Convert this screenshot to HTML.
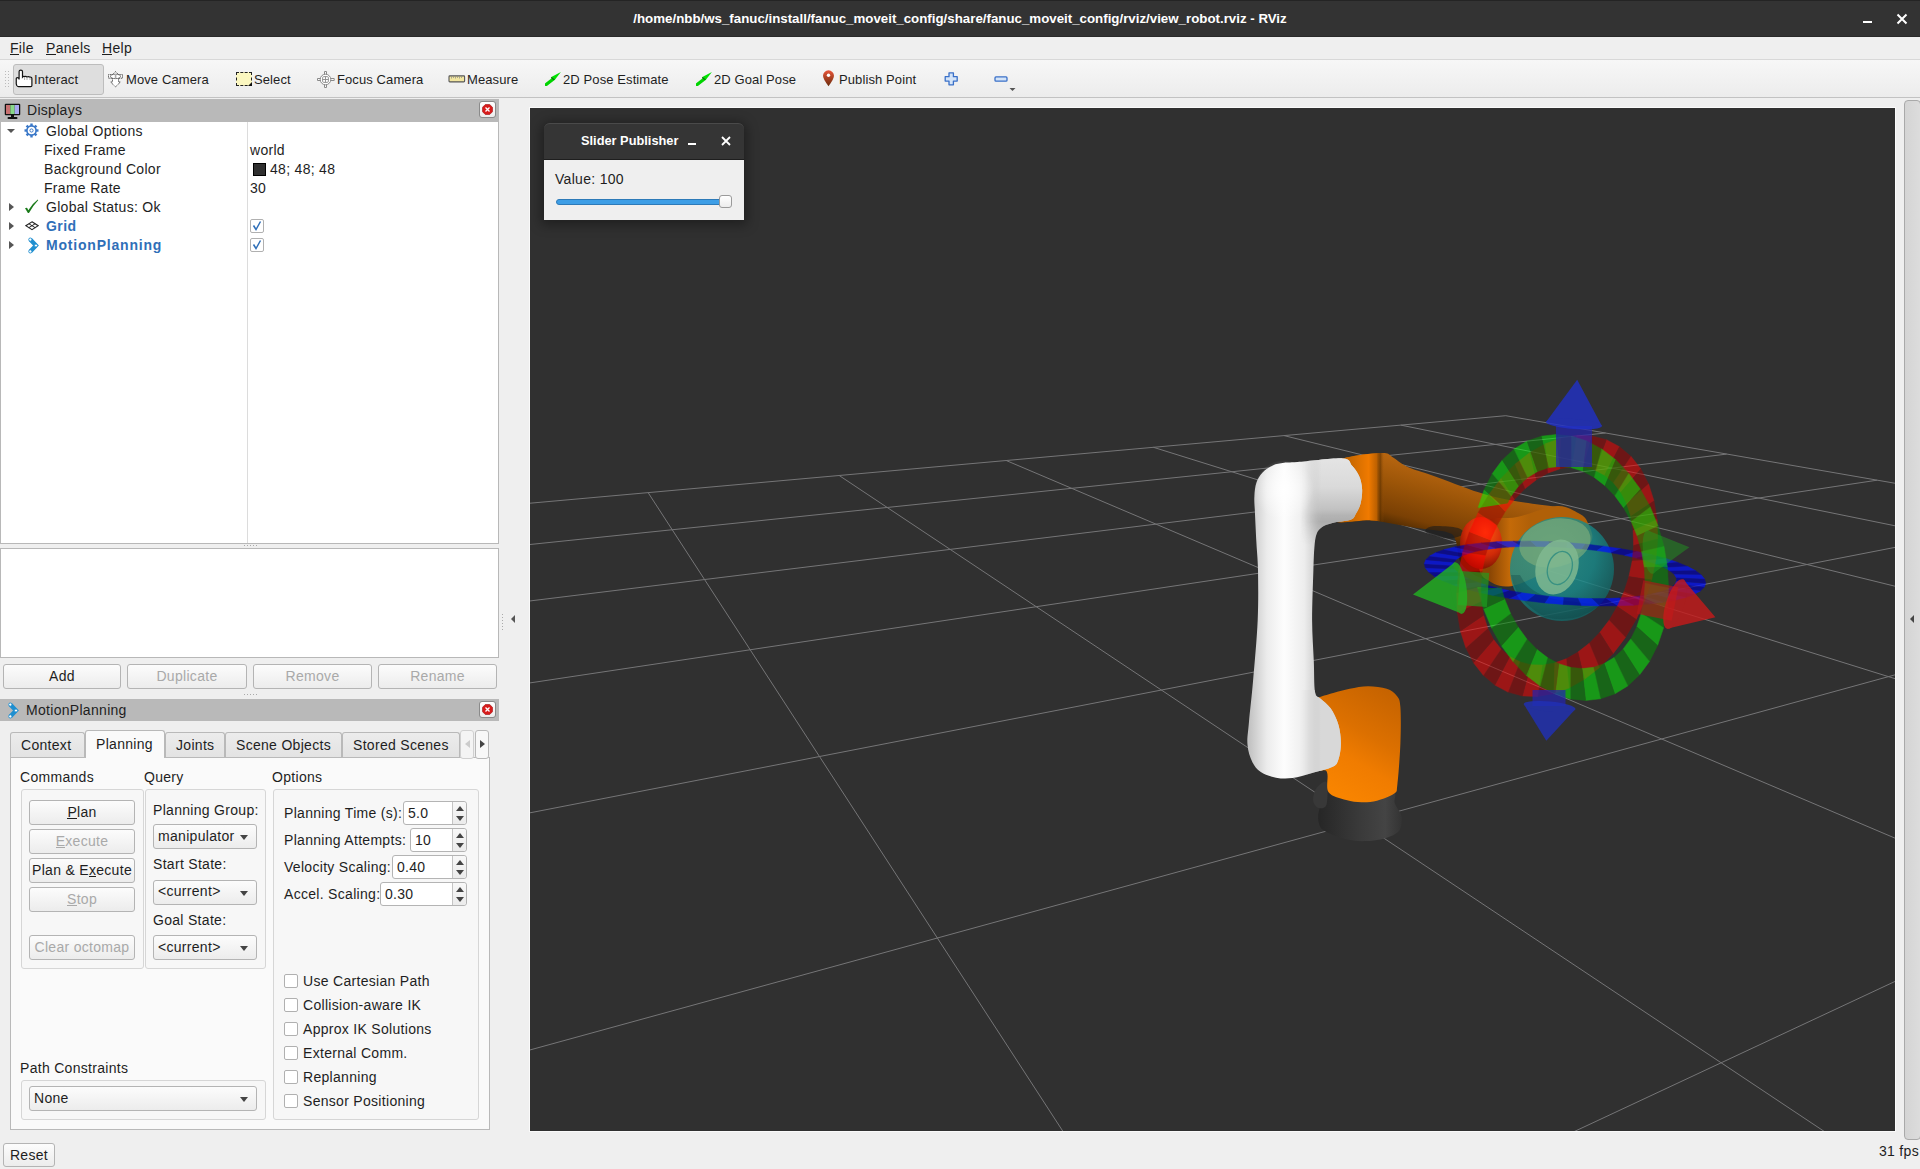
<!DOCTYPE html>
<html><head><meta charset="utf-8"><style>
*{margin:0;padding:0;box-sizing:border-box}
html,body{width:1920px;height:1169px;overflow:hidden;background:#efefef;font-family:"Liberation Sans",sans-serif}
.t{position:absolute;white-space:nowrap;font-size:14px;line-height:16px;letter-spacing:0.3px;color:#1e1e1e}
.abs{position:absolute}
.btn{position:absolute;border:1px solid #b4b4b4;border-radius:3px;background:linear-gradient(#fcfcfc,#ececec)}
.spin{position:absolute;border:1px solid #b4b4b4;border-radius:3px;background:#fff}
.spinbtn{position:absolute;border-left:1px solid #c4c4c4;background:linear-gradient(#f8f8f8,#ebebeb);border-radius:0 3px 3px 0}
.cb{position:absolute;width:14px;height:14px;border:1px solid #b0b0b0;border-radius:2px;background:#fff}
.tri-d{position:absolute;width:0;height:0;border-left:4.5px solid transparent;border-right:4.5px solid transparent;border-top:5px solid #444}
.tri-u{position:absolute;width:0;height:0;border-left:4.5px solid transparent;border-right:4.5px solid transparent;border-bottom:5px solid #444}
.tri-r{position:absolute;width:0;height:0;border-top:4px solid transparent;border-bottom:4px solid transparent;border-left:5px solid #555}
.tri-l{position:absolute;width:0;height:0;border-top:4px solid transparent;border-bottom:4px solid transparent;border-right:5px solid #555}
.gb{position:absolute;border:1px solid #d6d6d6;border-radius:3px;background:#f7f7f7}
.hdr{position:absolute;background:#b9b9b9}
.closeb{position:absolute;width:17px;height:17px;background:linear-gradient(#ffffff,#ececec);border:1px solid #8a8a8a;border-radius:3px}
.tab{position:absolute;border:1px solid #b9b9b9;border-bottom:none;border-radius:3px 3px 0 0;background:linear-gradient(#ececec,#e3e3e3)}
u{text-decoration:none;border-bottom:1px solid currentColor;line-height:12px;display:inline-block}
</style></head><body>
<div class="abs" style="left:0;top:0;width:1920px;height:37px;background:#333333"></div>
<div class="abs" style="left:0;top:0;width:1920px;height:1px;background:#242424"></div>
<div class="abs" style="left:0;top:36px;width:1920px;height:1px;background:#2a2a2a"></div>
<div class="t" style="left:0;width:1920px;text-align:center;top:11px;font-weight:bold;font-size:13.3px;letter-spacing:0;color:#ffffff">/home/nbb/ws_fanuc/install/fanuc_moveit_config/share/fanuc_moveit_config/rviz/view_robot.rviz - RViz</div>
<div class="abs" style="left:1863px;top:21px;width:9px;height:2px;background:#fff"></div>
<svg class="abs" style="left:1896px;top:13px" width="12" height="12"><path d="M1.5 1.5L10.5 10.5M10.5 1.5L1.5 10.5" stroke="#fff" stroke-width="2"/></svg>
<div class="abs" style="left:0;top:37px;width:1920px;height:22px;background:#efefef"></div>
<div class="t" style="left:10px;top:40px;"><u>F</u>ile</div>
<div class="t" style="left:46px;top:40px;"><u>P</u>anels</div>
<div class="t" style="left:102px;top:40px;"><u>H</u>elp</div>
<div class="abs" style="left:0;top:59px;width:1920px;height:39px;background:linear-gradient(#f7f7f7,#ececec);border-top:1px solid #d8d8d8;border-bottom:1px solid #c2c2c2"></div>
<svg class="abs" style="left:4px;top:70px" width="6" height="18"><rect x="1" y="1" width="1" height="1" fill="#bbb"/><rect x="1" y="4" width="1" height="1" fill="#bbb"/><rect x="1" y="7" width="1" height="1" fill="#bbb"/><rect x="1" y="10" width="1" height="1" fill="#bbb"/><rect x="1" y="13" width="1" height="1" fill="#bbb"/><rect x="1" y="16" width="1" height="1" fill="#bbb"/><rect x="4" y="1" width="1" height="1" fill="#bbb"/><rect x="4" y="4" width="1" height="1" fill="#bbb"/><rect x="4" y="7" width="1" height="1" fill="#bbb"/><rect x="4" y="10" width="1" height="1" fill="#bbb"/><rect x="4" y="13" width="1" height="1" fill="#bbb"/><rect x="4" y="16" width="1" height="1" fill="#bbb"/></svg>
<div class="abs" style="left:13px;top:64px;width:91px;height:31px;border:1px solid #bdbdbd;border-radius:3px;background:#dedede"></div>
<div class="t" style="left:34px;top:72px;font-size:13px;letter-spacing:0.1px">Interact</div>
<div class="t" style="left:126px;top:72px;font-size:13px;letter-spacing:0.1px">Move Camera</div>
<div class="t" style="left:254px;top:72px;font-size:13px;letter-spacing:0.1px">Select</div>
<div class="t" style="left:337px;top:72px;font-size:13px;letter-spacing:0.1px">Focus Camera</div>
<div class="t" style="left:467px;top:72px;font-size:13px;letter-spacing:0.1px">Measure</div>
<div class="t" style="left:563px;top:72px;font-size:13px;letter-spacing:0.1px">2D Pose Estimate</div>
<div class="t" style="left:714px;top:72px;font-size:13px;letter-spacing:0.1px">2D Goal Pose</div>
<div class="t" style="left:839px;top:72px;font-size:13px;letter-spacing:0.1px">Publish Point</div>
<svg class="abs" style="left:15px;top:69px" width="18" height="19"><path d="M4.1,10.5 L4.1,2.6 Q4.1,1.1 5.8,1.1 Q7.5,1.1 7.5,2.6 L7.5,8 Q8.5,6.8 9.6,7.6 Q10.8,6.9 12,8 Q13.5,7.2 15,8.2 Q16.9,8 16.9,9.8 L16.9,16.5 Q16.9,17.7 15.7,17.7 L3.5,17.7 Q2.5,17.7 1.8,16.5 L1.25,15 L1.25,9.5 Q1.25,8.6 2.3,8.6 Q4.1,8.6 4.1,10.5 Z" fill="#fff" stroke="#111" stroke-width="1.2"/><path d="M9.6,8V11M12,8.2V11M15,8.4V11" stroke="#999" stroke-width="0.8"/></svg>
<svg class="abs" style="left:107px;top:71px" width="17" height="17"><g stroke="#333" stroke-width="0.9" fill="#fff" stroke-dasharray="1.2 0.8"><path d="M8.5,0.7 L11.5,3.6 L15.5,3.6 L15.5,7.2 L11.5,7.2 L11.5,11 L13.5,11 L8.5,15.8 L3.5,11 L5.5,11 L5.5,7.2 L1.5,7.2 L1.5,3.6 L5.5,3.6 Z"/></g><ellipse cx="8.5" cy="5.4" rx="5" ry="2.2" fill="none" stroke="#555" stroke-width="0.8"/><rect x="7.8" y="4" width="1.6" height="3" fill="#aaa"/></svg>
<div class="abs" style="left:236px;top:72px;width:16px;height:14px;background:#fbf7c0;border:1px dashed #222"></div>
<svg class="abs" style="left:248px;top:82px" width="5" height="5"><path d="M4 0V4H0z" fill="#111"/></svg>
<svg class="abs" style="left:317px;top:71px" width="18" height="17"><g fill="#fff" stroke="#8a8a8a" stroke-width="1"><path d="M7.5,0.5 H9.5 V4 H7.5Z M7.5,13 H9.5 V16.5 H7.5Z M0.5,7.5 H4 V9.5 H0.5Z M13,7.5 H17.2 V9.5 H13Z"/><circle cx="8.5" cy="8.5" r="5.3"/></g><g stroke="#8a8a8a" stroke-width="0.9" fill="none"><rect x="5.6" y="5.6" width="5.8" height="5.8" rx="1.2"/><path d="M8.5,5.6V11.4M5.6,8.5H11.4"/></g></svg>
<svg class="abs" style="left:448px;top:75px" width="18" height="8"><rect x="1" y="0.9" width="15.6" height="6" rx="0.8" fill="#f2e6a0" stroke="#555" stroke-width="1.1"/><path d="M3.5,1.5V3.5M5.5,1.5V3M7.5,1.5V3.5M9.5,1.5V3M11.5,1.5V3.5M13.5,1.5V3" stroke="#888" stroke-width="0.7"/></svg>
<svg class="abs" style="left:545px;top:71px" width="17" height="15"><path d="M1.2,13.6 L8.3,7.9" stroke="#00d400" stroke-width="3.2" stroke-linecap="round"/><path d="M15.9,1 L5.9,6.2 L9.7,9.1 Z" fill="#00e000"/><path d="M6.2,6.5 L9.4,8.9" stroke="#0a6a0a" stroke-width="1.1"/></svg>
<svg class="abs" style="left:696px;top:71px" width="17" height="15"><path d="M1.2,13.6 L8.3,7.9" stroke="#00d400" stroke-width="3.2" stroke-linecap="round"/><path d="M15.9,1 L5.9,6.2 L9.7,9.1 Z" fill="#00e000"/><path d="M6.2,6.5 L9.4,8.9" stroke="#0a6a0a" stroke-width="1.1"/></svg>
<svg class="abs" style="left:822px;top:70px" width="13" height="17"><defs><linearGradient id="gpin" x1="0" y1="0" x2="0" y2="1"><stop offset="0" stop-color="#e8553a"/><stop offset="1" stop-color="#6a2c0c"/></linearGradient></defs><path d="M6.5,16.2 Q1,9 1,5.8 a5.5,5.5 0 0 1 11,0 Q12,9 6.5,16.2z" fill="url(#gpin)"/><circle cx="6.5" cy="5.2" r="1.7" fill="#fff"/></svg>
<svg class="abs" style="left:944px;top:72px" width="15" height="14"><path d="M5,0.9 H9.4 V4.65 H13.2 V9.05 H9.4 V12.8 H5 V9.05 H1.2 V4.65 H5 Z" fill="#d4e4f8" stroke="#3a70c8" stroke-width="1.3" stroke-linejoin="round"/></svg>
<svg class="abs" style="left:994px;top:76px" width="15" height="7"><rect x="1" y="0.9" width="12" height="4.3" rx="1" fill="#d4e4f8" stroke="#3a70c8" stroke-width="1.3"/></svg>
<svg class="abs" style="left:1009px;top:88px" width="7" height="4"><path d="M0.5 0H6.5L3.5 3z" fill="#555"/></svg>
<div class="hdr" style="left:0;top:99px;width:499px;height:23px"></div>
<svg class="abs" style="left:4px;top:103px" width="17" height="17"><rect x="0.75" y="0.75" width="15.5" height="11.5" fill="#111" rx="1"/><rect x="2" y="2" width="4.3" height="9" fill="#c87070"/><rect x="6.3" y="2" width="4.4" height="9" fill="#88d888"/><rect x="10.7" y="2" width="4.3" height="9" fill="#a8a8f0"/><rect x="7" y="12" width="3" height="2" fill="#111"/><rect x="3.5" y="14" width="10" height="2" rx="1" fill="#111"/></svg>
<div class="t" style="left:27px;top:102px;">Displays</div>
<div class="closeb" style="left:479px;top:101px"></div>
<svg class="abs" style="left:482px;top:104px" width="11" height="11"><path d="M3.3 0.5H7.7L10.5 3.3V7.7L7.7 10.5H3.3L0.5 7.7V3.3z" fill="#d81a1a" stroke="#a01010" stroke-width="0.6"/><path d="M3.5 3.5L7.5 7.5M7.5 3.5L3.5 7.5" stroke="#fff" stroke-width="1.3"/></svg>
<div class="abs" style="left:0;top:122px;width:499px;height:422px;background:#fff;border:1px solid #b8b8b8;border-top:none"></div>
<div class="abs" style="left:247px;top:122px;width:1px;height:421px;background:#dcdcdc"></div>
<div class="tri-d" style="left:7px;top:129px;border-left-width:4px;border-right-width:4px;border-top-width:4px;border-top-color:#555"></div>
<svg class="abs" style="left:24px;top:123px" width="15" height="15"><g transform="translate(7.5 7.5)"><circle r="4.6" fill="none" stroke="#3a78c8" stroke-width="1.6"/><circle r="1.6" fill="none" stroke="#3a78c8" stroke-width="1"/><rect x="-1.2" y="-7" width="2.4" height="2.6" fill="#3a78c8" transform="rotate(0)"/><rect x="-1.2" y="-7" width="2.4" height="2.6" fill="#3a78c8" transform="rotate(45)"/><rect x="-1.2" y="-7" width="2.4" height="2.6" fill="#3a78c8" transform="rotate(90)"/><rect x="-1.2" y="-7" width="2.4" height="2.6" fill="#3a78c8" transform="rotate(135)"/><rect x="-1.2" y="-7" width="2.4" height="2.6" fill="#3a78c8" transform="rotate(180)"/><rect x="-1.2" y="-7" width="2.4" height="2.6" fill="#3a78c8" transform="rotate(225)"/><rect x="-1.2" y="-7" width="2.4" height="2.6" fill="#3a78c8" transform="rotate(270)"/><rect x="-1.2" y="-7" width="2.4" height="2.6" fill="#3a78c8" transform="rotate(315)"/></g></svg>
<div class="t" style="left:46px;top:123px;">Global Options</div>
<div class="t" style="left:44px;top:142px;">Fixed Frame</div>
<div class="t" style="left:44px;top:161px;">Background Color</div>
<div class="t" style="left:44px;top:180px;">Frame Rate</div>
<div class="t" style="left:250px;top:142px;">world</div>
<div class="abs" style="left:253px;top:163px;width:13px;height:13px;background:#303030;border:1px solid #000"></div>
<div class="t" style="left:270px;top:161px;">48; 48; 48</div>
<div class="t" style="left:250px;top:180px;">30</div>
<div class="tri-r" style="left:9px;top:203px"></div>
<div class="tri-r" style="left:9px;top:222px"></div>
<div class="tri-r" style="left:9px;top:241px"></div>
<svg class="abs" style="left:24px;top:199px" width="15" height="15"><path d="M1,9.3 Q2.5,8.4 3.2,9 L4.3,11.2 Q8,5 13.8,0.6 L14.2,1.3 Q9.6,6 5,13.9 L3.9,13.9 Z" fill="#1a7a1a"/></svg>
<div class="t" style="left:46px;top:199px;">Global Status: Ok</div>
<svg class="abs" style="left:25px;top:221px" width="14" height="9.5"><path d="M7 0.8L13.2 4.7L7 8.6L0.8 4.7z" fill="none" stroke="#222" stroke-width="1.1"/><path d="M3.9 2.75L10.1 6.65M10.1 2.75L3.9 6.65" stroke="#222" stroke-width="1"/></svg>
<div class="t" style="left:46px;top:218px;font-weight:bold;color:#2f6fb8;letter-spacing:0.4px">Grid</div>
<svg class="abs" style="left:26px;top:237px" width="14" height="17"><path d="M4.3,2.5 L10,8.5 L4.3,14.5" stroke="#1f8fd0" stroke-width="4.2" fill="none" stroke-linejoin="miter"/><circle cx="4.3" cy="2.6" r="1.6" fill="#fff" stroke="#1f8fd0" stroke-width="0.9"/><circle cx="10" cy="8.5" r="1.5" fill="#fff" stroke="#1f8fd0" stroke-width="0.8"/><circle cx="4.3" cy="14.4" r="1.6" fill="#fff" stroke="#1f8fd0" stroke-width="0.9"/></svg>
<div class="t" style="left:46px;top:237px;font-weight:bold;color:#2f6fb8;letter-spacing:0.8px">MotionPlanning</div>
<div class="cb" style="left:250px;top:219px"></div>
<svg style="position:absolute;left:250px;top:219px" width="14" height="14"><path d="M3.5 6.5 L6 10.5 L10.5 2.5" stroke="#2f6fb8" stroke-width="1.5" fill="none"/></svg>
<div class="cb" style="left:250px;top:238px"></div>
<svg style="position:absolute;left:250px;top:238px" width="14" height="14"><path d="M3.5 6.5 L6 10.5 L10.5 2.5" stroke="#2f6fb8" stroke-width="1.5" fill="none"/></svg>
<svg class="abs" style="left:243px;top:545px" width="16" height="2"><rect x="1" y="0" width="1" height="1" fill="#aaa"/><rect x="4" y="0" width="1" height="1" fill="#aaa"/><rect x="7" y="0" width="1" height="1" fill="#aaa"/><rect x="10" y="0" width="1" height="1" fill="#aaa"/><rect x="13" y="0" width="1" height="1" fill="#aaa"/></svg>
<div class="abs" style="left:0;top:548px;width:499px;height:110px;background:#fff;border:1px solid #b8b8b8"></div>
<div class="btn" style="left:3px;top:664px;width:118px;height:25px;"></div>
<div class="t" style="left:3px;width:118px;text-align:center;top:668px;color:#1e1e1e">Add</div>
<div class="btn" style="left:127px;top:664px;width:120px;height:25px;"></div>
<div class="t" style="left:127px;width:120px;text-align:center;top:668px;color:#a9a9a9">Duplicate</div>
<div class="btn" style="left:253px;top:664px;width:119px;height:25px;"></div>
<div class="t" style="left:253px;width:119px;text-align:center;top:668px;color:#a9a9a9">Remove</div>
<div class="btn" style="left:378px;top:664px;width:119px;height:25px;"></div>
<div class="t" style="left:378px;width:119px;text-align:center;top:668px;color:#a9a9a9">Rename</div>
<svg class="abs" style="left:243px;top:694px" width="16" height="2"><rect x="1" y="0" width="1" height="1" fill="#aaa"/><rect x="4" y="0" width="1" height="1" fill="#aaa"/><rect x="7" y="0" width="1" height="1" fill="#aaa"/><rect x="10" y="0" width="1" height="1" fill="#aaa"/><rect x="13" y="0" width="1" height="1" fill="#aaa"/></svg>
<div class="hdr" style="left:0;top:699px;width:499px;height:22px"></div>
<svg class="abs" style="left:6px;top:702px" width="14" height="17"><path d="M4.3,2.5 L10,8.5 L4.3,14.5" stroke="#1f8fd0" stroke-width="4.2" fill="none" stroke-linejoin="miter"/><circle cx="4.3" cy="2.6" r="1.6" fill="#fff" stroke="#1f8fd0" stroke-width="0.9"/><circle cx="10" cy="8.5" r="1.5" fill="#fff" stroke="#1f8fd0" stroke-width="0.8"/><circle cx="4.3" cy="14.4" r="1.6" fill="#fff" stroke="#1f8fd0" stroke-width="0.9"/></svg>
<div class="t" style="left:26px;top:702px;">MotionPlanning</div>
<div class="closeb" style="left:479px;top:701px"></div>
<svg class="abs" style="left:482px;top:704px" width="11" height="11"><path d="M3.3 0.5H7.7L10.5 3.3V7.7L7.7 10.5H3.3L0.5 7.7V3.3z" fill="#d81a1a" stroke="#a01010" stroke-width="0.6"/><path d="M3.5 3.5L7.5 7.5M7.5 3.5L3.5 7.5" stroke="#fff" stroke-width="1.3"/></svg>
<div class="abs" style="left:10px;top:757px;width:480px;height:373px;background:#fafafa;border:1px solid #b9b9b9"></div>
<div class="tab" style="left:10px;top:732px;width:75px;height:25px"></div>
<div class="t" style="left:21px;top:737px;">Context</div>
<div class="tab" style="left:165px;top:732px;width:60px;height:25px"></div>
<div class="t" style="left:176px;top:737px;">Joints</div>
<div class="tab" style="left:225px;top:732px;width:117px;height:25px"></div>
<div class="t" style="left:236px;top:737px;">Scene Objects</div>
<div class="tab" style="left:342px;top:732px;width:118px;height:25px"></div>
<div class="t" style="left:353px;top:737px;">Stored Scenes</div>
<div class="abs" style="left:85px;top:730px;width:80px;height:28px;background:#fafafa;border:1px solid #b9b9b9;border-bottom:none;border-radius:3px 3px 0 0"></div>
<div class="t" style="left:96px;top:736px;">Planning</div>
<div class="abs" style="left:460px;top:730px;width:14px;height:29px;background:#f4f4f4;border:1px solid #d0d0d0;border-radius:3px"></div>
<div class="abs" style="left:475px;top:730px;width:14px;height:29px;background:#f8f8f8;border:1px solid #b9b9b9;border-radius:3px"></div>
<div class="tri-l" style="left:465px;top:740px;border-right-color:#ccc"></div>
<div class="tri-r" style="left:480px;top:740px;border-left-color:#444"></div>
<div class="t" style="left:20px;top:769px;">Commands</div>
<div class="t" style="left:144px;top:769px;">Query</div>
<div class="t" style="left:272px;top:769px;">Options</div>
<div class="gb" style="left:21px;top:789px;width:123px;height:180px"></div>
<div class="gb" style="left:145px;top:789px;width:121px;height:180px"></div>
<div class="gb" style="left:273px;top:789px;width:206px;height:331px"></div>
<div class="btn" style="left:29px;top:800px;width:106px;height:25px;"></div>
<div class="t" style="left:29px;width:106px;text-align:center;top:804px;color:#1e1e1e"><u>P</u>lan</div>
<div class="btn" style="left:29px;top:829px;width:106px;height:25px;"></div>
<div class="t" style="left:29px;width:106px;text-align:center;top:833px;color:#a9a9a9"><u>E</u>xecute</div>
<div class="btn" style="left:29px;top:858px;width:106px;height:25px;"></div>
<div class="t" style="left:29px;width:106px;text-align:center;top:862px;color:#1e1e1e">Plan &amp; E<u>x</u>ecute</div>
<div class="btn" style="left:29px;top:887px;width:106px;height:25px;"></div>
<div class="t" style="left:29px;width:106px;text-align:center;top:891px;color:#a9a9a9"><u>S</u>top</div>
<div class="btn" style="left:29px;top:935px;width:106px;height:25px;"></div>
<div class="t" style="left:29px;width:106px;text-align:center;top:939px;color:#a9a9a9">Clear octomap</div>
<div class="t" style="left:153px;top:802px;">Planning Group:</div>
<div class="btn" style="left:153px;top:824px;width:104px;height:25px"></div>
<div class="t" style="left:158px;top:828px;width:79px;overflow:hidden">manipulator</div>
<div class="tri-d" style="left:240px;top:834.5px"></div>
<div class="t" style="left:153px;top:856px;">Start State:</div>
<div class="btn" style="left:153px;top:880px;width:104px;height:25px"></div>
<div class="t" style="left:158px;top:883px;width:79px;overflow:hidden">&lt;current&gt;</div>
<div class="tri-d" style="left:240px;top:890.5px"></div>
<div class="t" style="left:153px;top:912px;">Goal State:</div>
<div class="btn" style="left:153px;top:935px;width:104px;height:25px"></div>
<div class="t" style="left:158px;top:939px;width:79px;overflow:hidden">&lt;current&gt;</div>
<div class="tri-d" style="left:240px;top:945.5px"></div>
<div class="t" style="left:284px;top:805px;">Planning Time (s):</div>
<div class="spin" style="left:403px;top:801px;width:64px;height:24px"></div>
<div class="spinbtn" style="left:452px;top:802px;width:14px;height:22px"></div>
<div class="t" style="left:408px;top:805px;">5.0</div>
<div class="tri-u" style="left:455.5px;top:806px"></div>
<div class="tri-d" style="left:455.5px;top:816px"></div>
<div class="t" style="left:284px;top:832px;">Planning Attempts:</div>
<div class="spin" style="left:410px;top:828px;width:57px;height:24px"></div>
<div class="spinbtn" style="left:452px;top:829px;width:14px;height:22px"></div>
<div class="t" style="left:415px;top:832px;">10</div>
<div class="tri-u" style="left:455.5px;top:833px"></div>
<div class="tri-d" style="left:455.5px;top:843px"></div>
<div class="t" style="left:284px;top:859px;">Velocity Scaling:</div>
<div class="spin" style="left:392px;top:855px;width:75px;height:24px"></div>
<div class="spinbtn" style="left:452px;top:856px;width:14px;height:22px"></div>
<div class="t" style="left:397px;top:859px;">0.40</div>
<div class="tri-u" style="left:455.5px;top:860px"></div>
<div class="tri-d" style="left:455.5px;top:870px"></div>
<div class="t" style="left:284px;top:886px;">Accel. Scaling:</div>
<div class="spin" style="left:380px;top:882px;width:87px;height:24px"></div>
<div class="spinbtn" style="left:452px;top:883px;width:14px;height:22px"></div>
<div class="t" style="left:385px;top:886px;">0.30</div>
<div class="tri-u" style="left:455.5px;top:887px"></div>
<div class="tri-d" style="left:455.5px;top:897px"></div>
<div class="cb" style="left:284px;top:974px"></div>
<div class="t" style="left:303px;top:973px;">Use Cartesian Path</div>
<div class="cb" style="left:284px;top:998px"></div>
<div class="t" style="left:303px;top:997px;">Collision-aware IK</div>
<div class="cb" style="left:284px;top:1022px"></div>
<div class="t" style="left:303px;top:1021px;">Approx IK Solutions</div>
<div class="cb" style="left:284px;top:1046px"></div>
<div class="t" style="left:303px;top:1045px;">External Comm.</div>
<div class="cb" style="left:284px;top:1070px"></div>
<div class="t" style="left:303px;top:1069px;">Replanning</div>
<div class="cb" style="left:284px;top:1094px"></div>
<div class="t" style="left:303px;top:1093px;">Sensor Positioning</div>
<div class="t" style="left:20px;top:1060px;">Path Constraints</div>
<div class="gb" style="left:21px;top:1080px;width:245px;height:40px"></div>
<div class="btn" style="left:29px;top:1086px;width:228px;height:25px"></div>
<div class="t" style="left:34px;top:1090px;width:203px;overflow:hidden">None</div>
<div class="tri-d" style="left:240px;top:1096.5px"></div>
<svg class="abs" style="left:502px;top:613px" width="2" height="18"><rect x="0" y="1" width="1" height="1" fill="#aaa"/><rect x="0" y="4" width="1" height="1" fill="#aaa"/><rect x="0" y="7" width="1" height="1" fill="#aaa"/><rect x="0" y="10" width="1" height="1" fill="#aaa"/><rect x="0" y="13" width="1" height="1" fill="#aaa"/><rect x="0" y="16" width="1" height="1" fill="#aaa"/></svg>
<div class="tri-l" style="left:511px;top:615px;border-right-color:#555;border-top-width:4px;border-bottom-width:4px;border-right-width:4px"></div>
<div class="btn" style="left:3px;top:1143px;width:52px;height:24px;"></div>
<div class="t" style="left:3px;width:52px;text-align:center;top:1147px;color:#1e1e1e">Reset</div>
<div class="t" style="left:1879px;top:1143px;">31 fps</div>
<div class="abs" style="left:1904px;top:100px;width:17px;height:1040px;background:linear-gradient(90deg,#d4d4d4,#dcdcdc);border:1px solid #a9a9a9;border-radius:4px"></div>
<div class="tri-l" style="left:1910px;top:615px;border-right-color:#444;border-top-width:4px;border-bottom-width:4px;border-right-width:4px"></div>
<div class="abs" style="left:529px;top:107px;width:1367px;height:1025px;background:#fafafa"></div>
<svg class="abs" style="left:0;top:0" width="1920" height="1169" viewBox="0 0 1920 1169"><defs><clipPath id="vc"><rect x="530" y="108" width="1365" height="1023"/></clipPath></defs><g clip-path="url(#vc)"><rect x="530" y="108" width="1365" height="1023" fill="#303030"/><g stroke="#8c8c8e" stroke-width="1" fill="none" opacity="0.75"><line x1="648.1" y1="492.6" x2="1064.0" y2="1133.0"/><line x1="839.2" y1="475.5" x2="1826.6" y2="1133.0"/><line x1="1006.2" y1="460.5" x2="1897.0" y2="839.0"/><line x1="1153.4" y1="447.3" x2="1897.0" y2="679.3"/><line x1="1284.0" y1="435.6" x2="1897.0" y2="586.7"/><line x1="1400.8" y1="425.1" x2="1897.0" y2="526.2"/><line x1="1505.8" y1="415.7" x2="1897.0" y2="483.6"/><line x1="528.0" y1="503.4" x2="1505.8" y2="415.7"/><line x1="528.0" y1="544.7" x2="1605.5" y2="433.0"/><line x1="528.0" y1="601.2" x2="1726.6" y2="454.1"/><line x1="528.0" y1="683.2" x2="1877.1" y2="480.2"/><line x1="528.0" y1="813.2" x2="1897.0" y2="547.0"/><line x1="528.0" y1="1050.5" x2="1897.0" y2="674.3"/><line x1="1571.1" y1="1133.0" x2="1897.0" y2="980.5"/></g><defs><linearGradient id="gw" gradientUnits="userSpaceOnUse" x1="1250" y1="0" x2="1318" y2="0"><stop offset="0" stop-color="#c4c4c4"/><stop offset="0.25" stop-color="#ececec"/><stop offset="0.5" stop-color="#fdfdfd"/><stop offset="0.8" stop-color="#ededed"/><stop offset="1" stop-color="#c8c8c8"/></linearGradient><linearGradient id="gwh" gradientUnits="userSpaceOnUse" x1="0" y1="458" x2="0" y2="522"><stop offset="0" stop-color="#e4e4e4"/><stop offset="0.45" stop-color="#dadada"/><stop offset="0.8" stop-color="#c2c2c2"/><stop offset="1" stop-color="#a4a4a4"/></linearGradient><linearGradient id="fadeR" gradientUnits="userSpaceOnUse" x1="1300" y1="0" x2="1322" y2="0"><stop offset="0" stop-color="#fff" stop-opacity="0"/><stop offset="1" stop-color="#fff" stop-opacity="1"/></linearGradient><mask id="mfr"><rect x="1180" y="360" width="600" height="500" fill="url(#fadeR)"/></mask><radialGradient id="gwtop" gradientUnits="userSpaceOnUse" cx="1284" cy="490" r="30"><stop offset="0" stop-color="#ffffff" stop-opacity="0.9"/><stop offset="1" stop-color="#ffffff" stop-opacity="0"/></radialGradient><linearGradient id="go" gradientUnits="userSpaceOnUse" x1="1420" y1="462" x2="1400" y2="535"><stop offset="0" stop-color="#b86610"/><stop offset="0.35" stop-color="#9c5508"/><stop offset="0.75" stop-color="#7a4004"/><stop offset="1" stop-color="#3a2000"/></linearGradient><linearGradient id="gob" gradientUnits="userSpaceOnUse" x1="1350" y1="0" x2="1384" y2="0"><stop offset="0" stop-color="#c86800" stop-opacity="1"/><stop offset="0.55" stop-color="#f07a00" stop-opacity="1"/><stop offset="0.78" stop-color="#c06200" stop-opacity="0.95"/><stop offset="0.9" stop-color="#5a3000" stop-opacity="0.55"/><stop offset="1" stop-color="#9a5208" stop-opacity="0"/></linearGradient><linearGradient id="gj" gradientUnits="userSpaceOnUse" x1="1395" y1="690" x2="1335" y2="790"><stop offset="0" stop-color="#c46200"/><stop offset="0.45" stop-color="#dc7000"/><stop offset="0.7" stop-color="#f07c00"/><stop offset="1" stop-color="#f88400"/></linearGradient><linearGradient id="gb" gradientUnits="userSpaceOnUse" x1="1318" y1="0" x2="1402" y2="0"><stop offset="0" stop-color="#262626"/><stop offset="0.5" stop-color="#3a3a3a"/><stop offset="0.8" stop-color="#444444"/><stop offset="1" stop-color="#333333"/></linearGradient><radialGradient id="gcy" cx="0.4" cy="0.35" r="0.7"><stop offset="0" stop-color="#2a9e96"/><stop offset="0.6" stop-color="#188c8c"/><stop offset="1" stop-color="#126060"/></radialGradient><radialGradient id="grs" cx="0.6" cy="0.3" r="0.75"><stop offset="0" stop-color="#ff5a10"/><stop offset="0.6" stop-color="#d02a08"/><stop offset="1" stop-color="#701200"/></radialGradient><linearGradient id="gwr" gradientUnits="userSpaceOnUse" x1="1490" y1="0" x2="1530" y2="0"><stop offset="0" stop-color="#8a4604"/><stop offset="0.5" stop-color="#c46a08"/><stop offset="1" stop-color="#b06008"/></linearGradient></defs><path d="M1328.6,788.4C1324.3,790.6 1320.7,804.0 1319.1,809.9C1317.5,815.9 1318.1,820.3 1319.1,823.9C1320.2,827.5 1321.0,828.9 1325.5,831.5C1330.0,834.1 1339.6,837.7 1346.2,839.3C1352.9,840.9 1358.9,841.3 1365.3,841.1C1371.7,841.0 1379.1,840.1 1384.6,838.5C1390.2,836.9 1395.7,834.3 1398.6,831.5C1401.4,828.7 1401.3,824.6 1401.7,821.6C1402.0,818.7 1402.0,816.9 1400.8,813.8C1399.7,810.8 1395.8,806.7 1394.7,803.2C1393.5,799.6 1397.4,793.6 1393.9,792.5C1390.4,791.4 1381.9,795.9 1373.7,796.6C1365.6,797.3 1352.5,798.0 1345.0,796.6C1337.5,795.2 1332.9,786.2 1328.6,788.4Z" fill="url(#gb)"/><path d="M1326.5,782.2C1324.8,779.5 1318.5,785.3 1316.2,788.4C1314.0,791.5 1312.8,797.4 1313.2,800.7C1313.5,803.9 1316.1,807.2 1318.3,807.9C1320.5,808.6 1325.1,809.1 1326.5,804.8C1327.9,800.5 1328.2,785.0 1326.5,782.2Z" fill="#383838"/><path d="M1312.1,702.1C1312.2,691.2 1313.3,699.6 1316.9,698.0C1320.4,696.5 1327.8,694.4 1333.3,692.9C1338.8,691.4 1343.9,689.9 1349.7,688.8C1355.5,687.7 1362.0,686.3 1368.2,686.3C1374.4,686.3 1381.9,687.2 1386.7,688.8C1391.5,690.4 1394.6,692.9 1396.9,696.0C1399.2,699.1 1399.8,699.4 1400.4,707.3C1401.0,715.1 1400.9,730.4 1400.4,743.2C1399.9,756.0 1398.4,775.9 1397.4,784.3C1396.3,792.7 1397.7,790.8 1394.3,793.5C1390.9,796.2 1382.5,799.2 1377.0,800.7C1371.6,802.2 1366.8,802.4 1361.6,802.3C1356.5,802.2 1351.7,801.8 1346.2,800.1C1340.7,798.4 1331.8,797.0 1328.6,792.3C1325.3,787.6 1329.0,776.7 1326.9,772.0C1324.9,767.2 1318.7,775.4 1316.2,763.7C1313.8,752.1 1312.0,713.1 1312.1,702.1Z" fill="url(#gj)"/><clipPath id="carm"><path d="M1333.8,461.2C1335.0,459.3 1335.1,460.2 1340.0,459.1C1344.9,458.0 1355.7,455.6 1363.1,454.6C1370.5,453.6 1379.8,452.7 1384.6,453.1C1389.5,453.5 1388.5,454.6 1392.3,456.9C1396.2,459.2 1401.1,463.9 1407.7,466.9C1414.4,470.0 1420.6,471.2 1432.4,475.4C1444.2,479.6 1465.7,488.2 1478.5,492.3C1491.4,496.4 1499.1,498.0 1509.3,500.0C1519.6,502.1 1531.1,503.4 1540.1,504.7C1549.1,505.9 1557.1,506.2 1563.2,507.7C1569.4,509.3 1573.2,511.6 1577.1,513.9C1580.9,516.2 1584.1,518.5 1586.3,521.6C1588.5,524.7 1591.2,528.0 1590.2,532.4C1589.1,536.7 1592.3,539.0 1580.1,547.8C1568.0,556.5 1532.7,579.4 1517.0,584.7C1501.4,590.0 1493.9,581.4 1486.2,579.3C1478.5,577.3 1475.2,575.3 1470.8,572.4C1466.5,569.4 1462.6,567.0 1460.1,561.6C1457.5,556.2 1457.5,544.9 1455.5,540.1C1453.4,535.2 1454.2,534.4 1447.8,532.4C1441.3,530.4 1426.0,529.5 1417.0,528.1C1408.0,526.6 1401.6,525.2 1393.9,523.9C1386.2,522.6 1380.8,520.8 1370.8,520.4C1360.8,519.9 1340.1,524.4 1333.8,521.3C1327.6,518.2 1333.2,510.0 1333.1,501.6C1332.9,493.2 1332.9,477.5 1333.1,470.8C1333.2,464.1 1332.7,463.2 1333.8,461.2Z"/></clipPath><path d="M1333.8,461.2C1335.0,459.3 1335.1,460.2 1340.0,459.1C1344.9,458.0 1355.7,455.6 1363.1,454.6C1370.5,453.6 1379.8,452.7 1384.6,453.1C1389.5,453.5 1388.5,454.6 1392.3,456.9C1396.2,459.2 1401.1,463.9 1407.7,466.9C1414.4,470.0 1420.6,471.2 1432.4,475.4C1444.2,479.6 1465.7,488.2 1478.5,492.3C1491.4,496.4 1499.1,498.0 1509.3,500.0C1519.6,502.1 1531.1,503.4 1540.1,504.7C1549.1,505.9 1557.1,506.2 1563.2,507.7C1569.4,509.3 1573.2,511.6 1577.1,513.9C1580.9,516.2 1584.1,518.5 1586.3,521.6C1588.5,524.7 1591.2,528.0 1590.2,532.4C1589.1,536.7 1592.3,539.0 1580.1,547.8C1568.0,556.5 1532.7,579.4 1517.0,584.7C1501.4,590.0 1493.9,581.4 1486.2,579.3C1478.5,577.3 1475.2,575.3 1470.8,572.4C1466.5,569.4 1462.6,567.0 1460.1,561.6C1457.5,556.2 1457.5,544.9 1455.5,540.1C1453.4,535.2 1454.2,534.4 1447.8,532.4C1441.3,530.4 1426.0,529.5 1417.0,528.1C1408.0,526.6 1401.6,525.2 1393.9,523.9C1386.2,522.6 1380.8,520.8 1370.8,520.4C1360.8,519.9 1340.1,524.4 1333.8,521.3C1327.6,518.2 1333.2,510.0 1333.1,501.6C1332.9,493.2 1332.9,477.5 1333.1,470.8C1333.2,464.1 1332.7,463.2 1333.8,461.2Z" fill="url(#go)"/><rect x="1330" y="440" width="60" height="100" fill="url(#gob)" clip-path="url(#carm)"/><path d="M1487.8,520.0C1493.7,516.5 1505.7,519.3 1517.0,517.0C1528.3,514.7 1545.5,507.0 1555.5,506.2C1565.5,505.4 1571.7,509.5 1577.1,512.4C1582.5,515.2 1586.3,517.2 1587.8,523.1C1589.4,529.0 1598.1,537.5 1586.3,547.8C1574.5,558.0 1533.7,579.4 1517.0,584.7C1500.4,590.0 1492.7,582.9 1486.2,579.3C1479.8,575.7 1479.3,570.0 1478.5,563.2C1477.8,556.4 1480.1,545.7 1481.6,538.5C1483.2,531.3 1481.9,523.6 1487.8,520.0Z" fill="url(#gwr)"/><path d="M1432.4,526.2C1437.5,525.4 1451.9,526.5 1457.0,527.7C1462.1,529.0 1464.7,532.1 1463.2,533.9C1461.6,535.7 1453.9,538.8 1447.8,538.5C1441.6,538.3 1428.8,534.4 1426.2,532.4C1423.6,530.3 1427.2,527.0 1432.4,526.2Z" fill="#1a1a1a" opacity="0.6"/><ellipse cx="1481" cy="543" rx="21" ry="26" fill="url(#grs)"/><path d="M1258.0,570.0C1257.7,557.0 1256.9,552.1 1256.4,542.4C1255.9,532.6 1255.2,519.3 1254.9,511.6C1254.5,503.9 1254.1,501.0 1254.4,496.2C1254.6,491.4 1255.1,486.8 1256.4,482.8C1257.8,478.9 1259.8,475.5 1262.6,472.6C1265.3,469.7 1269.2,467.0 1272.8,465.4C1276.4,463.8 1280.0,463.4 1284.1,462.8C1288.2,462.3 1287.7,462.8 1297.5,462.1C1307.2,461.4 1333.6,457.9 1342.6,458.4C1351.7,459.0 1349.1,462.5 1351.9,465.4C1354.6,468.3 1357.3,471.7 1359.0,475.7C1360.8,479.6 1361.9,484.4 1362.1,489.0C1362.4,493.6 1361.6,499.3 1360.6,503.4C1359.6,507.5 1357.6,510.9 1356.0,513.6C1354.3,516.4 1354.8,518.2 1350.8,519.8C1346.9,521.3 1337.2,521.7 1332.4,522.9C1327.6,524.1 1324.8,525.1 1322.1,527.0C1319.5,528.9 1317.7,530.7 1316.5,534.2C1315.2,537.6 1314.9,541.5 1314.4,547.5C1313.9,553.5 1313.8,557.9 1313.4,570.0C1313.0,582.1 1312.1,604.8 1312.1,620.0C1312.2,635.2 1313.3,649.1 1313.8,661.1C1314.3,673.0 1313.9,685.6 1315.0,691.9C1316.1,698.1 1317.7,695.7 1320.3,698.4C1323.0,701.2 1327.6,703.9 1330.6,708.3C1333.6,712.7 1336.7,718.9 1338.4,724.7C1340.1,730.5 1340.9,737.4 1340.9,743.2C1340.9,749.0 1339.8,755.7 1338.4,759.6C1337.0,763.6 1337.0,764.6 1332.7,766.8C1328.3,769.0 1318.8,771.1 1312.1,773.0C1305.4,774.9 1298.4,777.3 1292.4,778.1C1286.4,778.9 1281.3,778.7 1276.0,777.7C1270.7,776.7 1264.8,774.6 1260.8,772.0C1256.8,769.3 1254.4,766.2 1252.2,761.7C1250.0,757.2 1248.0,751.3 1247.5,744.8C1246.9,738.3 1248.0,733.2 1248.9,722.7C1249.8,712.1 1251.5,698.7 1253.0,681.6C1254.5,664.5 1256.9,638.6 1257.7,620.0C1258.5,601.4 1258.2,582.9 1258.0,570.0Z" fill="url(#gw)"/><linearGradient id="fadeV" gradientUnits="userSpaceOnUse" x1="0" y1="515" x2="0" y2="545"><stop offset="0" stop-color="#fff"/><stop offset="1" stop-color="#000"/></linearGradient><mask id="mfv"><rect x="1180" y="360" width="600" height="500" fill="url(#fadeV)"/></mask><g mask="url(#mfr)"><path d="M1258.0,570.0C1257.7,557.0 1256.9,552.1 1256.4,542.4C1255.9,532.6 1255.2,519.3 1254.9,511.6C1254.5,503.9 1254.1,501.0 1254.4,496.2C1254.6,491.4 1255.1,486.8 1256.4,482.8C1257.8,478.9 1259.8,475.5 1262.6,472.6C1265.3,469.7 1269.2,467.0 1272.8,465.4C1276.4,463.8 1280.0,463.4 1284.1,462.8C1288.2,462.3 1287.7,462.8 1297.5,462.1C1307.2,461.4 1333.6,457.9 1342.6,458.4C1351.7,459.0 1349.1,462.5 1351.9,465.4C1354.6,468.3 1357.3,471.7 1359.0,475.7C1360.8,479.6 1361.9,484.4 1362.1,489.0C1362.4,493.6 1361.6,499.3 1360.6,503.4C1359.6,507.5 1357.6,510.9 1356.0,513.6C1354.3,516.4 1354.8,518.2 1350.8,519.8C1346.9,521.3 1337.2,521.7 1332.4,522.9C1327.6,524.1 1324.8,525.1 1322.1,527.0C1319.5,528.9 1317.7,530.7 1316.5,534.2C1315.2,537.6 1314.9,541.5 1314.4,547.5C1313.9,553.5 1313.8,557.9 1313.4,570.0C1313.0,582.1 1312.1,604.8 1312.1,620.0C1312.2,635.2 1313.3,649.1 1313.8,661.1C1314.3,673.0 1313.9,685.6 1315.0,691.9C1316.1,698.1 1317.7,695.7 1320.3,698.4C1323.0,701.2 1327.6,703.9 1330.6,708.3C1333.6,712.7 1336.7,718.9 1338.4,724.7C1340.1,730.5 1340.9,737.4 1340.9,743.2C1340.9,749.0 1339.8,755.7 1338.4,759.6C1337.0,763.6 1337.0,764.6 1332.7,766.8C1328.3,769.0 1318.8,771.1 1312.1,773.0C1305.4,774.9 1298.4,777.3 1292.4,778.1C1286.4,778.9 1281.3,778.7 1276.0,777.7C1270.7,776.7 1264.8,774.6 1260.8,772.0C1256.8,769.3 1254.4,766.2 1252.2,761.7C1250.0,757.2 1248.0,751.3 1247.5,744.8C1246.9,738.3 1248.0,733.2 1248.9,722.7C1249.8,712.1 1251.5,698.7 1253.0,681.6C1254.5,664.5 1256.9,638.6 1257.7,620.0C1258.5,601.4 1258.2,582.9 1258.0,570.0Z" fill="url(#gwh)" mask="url(#mfv)"/></g><clipPath id="clo"><rect x="1180" y="690" width="300" height="200"/></clipPath><path d="M1258.0,570.0C1257.7,557.0 1256.9,552.1 1256.4,542.4C1255.9,532.6 1255.2,519.3 1254.9,511.6C1254.5,503.9 1254.1,501.0 1254.4,496.2C1254.6,491.4 1255.1,486.8 1256.4,482.8C1257.8,478.9 1259.8,475.5 1262.6,472.6C1265.3,469.7 1269.2,467.0 1272.8,465.4C1276.4,463.8 1280.0,463.4 1284.1,462.8C1288.2,462.3 1287.7,462.8 1297.5,462.1C1307.2,461.4 1333.6,457.9 1342.6,458.4C1351.7,459.0 1349.1,462.5 1351.9,465.4C1354.6,468.3 1357.3,471.7 1359.0,475.7C1360.8,479.6 1361.9,484.4 1362.1,489.0C1362.4,493.6 1361.6,499.3 1360.6,503.4C1359.6,507.5 1357.6,510.9 1356.0,513.6C1354.3,516.4 1354.8,518.2 1350.8,519.8C1346.9,521.3 1337.2,521.7 1332.4,522.9C1327.6,524.1 1324.8,525.1 1322.1,527.0C1319.5,528.9 1317.7,530.7 1316.5,534.2C1315.2,537.6 1314.9,541.5 1314.4,547.5C1313.9,553.5 1313.8,557.9 1313.4,570.0C1313.0,582.1 1312.1,604.8 1312.1,620.0C1312.2,635.2 1313.3,649.1 1313.8,661.1C1314.3,673.0 1313.9,685.6 1315.0,691.9C1316.1,698.1 1317.7,695.7 1320.3,698.4C1323.0,701.2 1327.6,703.9 1330.6,708.3C1333.6,712.7 1336.7,718.9 1338.4,724.7C1340.1,730.5 1340.9,737.4 1340.9,743.2C1340.9,749.0 1339.8,755.7 1338.4,759.6C1337.0,763.6 1337.0,764.6 1332.7,766.8C1328.3,769.0 1318.8,771.1 1312.1,773.0C1305.4,774.9 1298.4,777.3 1292.4,778.1C1286.4,778.9 1281.3,778.7 1276.0,777.7C1270.7,776.7 1264.8,774.6 1260.8,772.0C1256.8,769.3 1254.4,766.2 1252.2,761.7C1250.0,757.2 1248.0,751.3 1247.5,744.8C1246.9,738.3 1248.0,733.2 1248.9,722.7C1249.8,712.1 1251.5,698.7 1253.0,681.6C1254.5,664.5 1256.9,638.6 1257.7,620.0C1258.5,601.4 1258.2,582.9 1258.0,570.0Z" fill="#d8d8d8" mask="url(#mfr)" clip-path="url(#clo)"/><circle cx="1284" cy="490" r="30" fill="url(#gwtop)"/><clipPath id="cbk"><rect x="1300" y="300" width="500" height="271"/></clipPath><clipPath id="cfr"><rect x="1300" y="571" width="500" height="300"/></clipPath><circle cx="1562" cy="569" r="52" fill="url(#gcy)" opacity="0.8"/><g clip-path="url(#cbk)"><g opacity="0.72" shape-rendering="geometricPrecision"><path d="M1705.7,583.3 L1704.2,587.3 L1675.0,584.2 L1676.6,581.1Z" fill="#0010ff" stroke="#0010ff" stroke-width="0.5"/><path d="M1704.2,587.3 L1700.3,591.0 L1671.6,587.1 L1675.0,584.2Z" fill="#0000a8" stroke="#0000a8" stroke-width="0.5"/><path d="M1700.3,591.0 L1694.1,594.4 L1666.5,589.7 L1671.6,587.1Z" fill="#0010ff" stroke="#0010ff" stroke-width="0.5"/><path d="M1694.1,594.4 L1685.7,597.5 L1659.7,592.1 L1666.5,589.7Z" fill="#0000a8" stroke="#0000a8" stroke-width="0.5"/><path d="M1685.7,597.5 L1675.3,600.1 L1651.4,594.1 L1659.7,592.1Z" fill="#0010ff" stroke="#0010ff" stroke-width="0.5"/><path d="M1675.3,600.1 L1662.9,602.3 L1641.6,595.8 L1651.4,594.1Z" fill="#0000a8" stroke="#0000a8" stroke-width="0.5"/><path d="M1662.9,602.3 L1648.9,604.0 L1630.6,597.1 L1641.6,595.8Z" fill="#0010ff" stroke="#0010ff" stroke-width="0.5"/><path d="M1648.9,604.0 L1633.5,605.2 L1618.5,598.1 L1630.6,597.1Z" fill="#0000a8" stroke="#0000a8" stroke-width="0.5"/><path d="M1633.5,605.2 L1616.8,605.8 L1605.5,598.5 L1618.5,598.1Z" fill="#0010ff" stroke="#0010ff" stroke-width="0.5"/><path d="M1616.8,605.8 L1599.3,605.9 L1591.8,598.6 L1605.5,598.5Z" fill="#0000a8" stroke="#0000a8" stroke-width="0.5"/><path d="M1599.3,605.9 L1581.2,605.4 L1577.7,598.2 L1591.8,598.6Z" fill="#0010ff" stroke="#0010ff" stroke-width="0.5"/><path d="M1581.2,605.4 L1562.8,604.4 L1563.3,597.4 L1577.7,598.2Z" fill="#0000a8" stroke="#0000a8" stroke-width="0.5"/><path d="M1562.8,604.4 L1544.5,602.9 L1549.0,596.2 L1563.3,597.4Z" fill="#0010ff" stroke="#0010ff" stroke-width="0.5"/><path d="M1544.5,602.9 L1526.5,600.8 L1534.9,594.6 L1549.0,596.2Z" fill="#0000a8" stroke="#0000a8" stroke-width="0.5"/><path d="M1526.5,600.8 L1509.2,598.3 L1521.4,592.7 L1534.9,594.6Z" fill="#0010ff" stroke="#0010ff" stroke-width="0.5"/><path d="M1509.2,598.3 L1492.8,595.4 L1508.6,590.4 L1521.4,592.7Z" fill="#0000a8" stroke="#0000a8" stroke-width="0.5"/><path d="M1492.8,595.4 L1477.7,592.0 L1496.7,587.8 L1508.6,590.4Z" fill="#0010ff" stroke="#0010ff" stroke-width="0.5"/><path d="M1477.7,592.0 L1464.0,588.4 L1485.9,585.0 L1496.7,587.8Z" fill="#0000a8" stroke="#0000a8" stroke-width="0.5"/><path d="M1464.0,588.4 L1452.1,584.5 L1476.5,581.9 L1485.9,585.0Z" fill="#0010ff" stroke="#0010ff" stroke-width="0.5"/><path d="M1452.1,584.5 L1442.1,580.4 L1468.5,578.7 L1476.5,581.9Z" fill="#0000a8" stroke="#0000a8" stroke-width="0.5"/><path d="M1442.1,580.4 L1434.2,576.2 L1462.1,575.4 L1468.5,578.7Z" fill="#0010ff" stroke="#0010ff" stroke-width="0.5"/><path d="M1434.2,576.2 L1428.6,572.0 L1457.4,572.1 L1462.1,575.4Z" fill="#0000a8" stroke="#0000a8" stroke-width="0.5"/><path d="M1428.6,572.0 L1425.3,567.8 L1454.4,568.8 L1457.4,572.1Z" fill="#0010ff" stroke="#0010ff" stroke-width="0.5"/><path d="M1425.3,567.8 L1424.3,563.7 L1453.3,565.5 L1454.4,568.8Z" fill="#0000a8" stroke="#0000a8" stroke-width="0.5"/><path d="M1424.3,563.7 L1425.8,559.7 L1454.0,562.3 L1453.3,565.5Z" fill="#0010ff" stroke="#0010ff" stroke-width="0.5"/><path d="M1425.8,559.7 L1429.7,556.0 L1456.5,559.3 L1454.0,562.3Z" fill="#0000a8" stroke="#0000a8" stroke-width="0.5"/><path d="M1429.7,556.0 L1435.9,552.6 L1461.0,556.4 L1456.5,559.3Z" fill="#0010ff" stroke="#0010ff" stroke-width="0.5"/><path d="M1435.9,552.6 L1444.3,549.5 L1467.2,553.9 L1461.0,556.4Z" fill="#0000a8" stroke="#0000a8" stroke-width="0.5"/><path d="M1444.3,549.5 L1454.7,546.9 L1475.2,551.6 L1467.2,553.9Z" fill="#0010ff" stroke="#0010ff" stroke-width="0.5"/><path d="M1454.7,546.9 L1467.1,544.7 L1484.8,549.7 L1475.2,551.6Z" fill="#0000a8" stroke="#0000a8" stroke-width="0.5"/><path d="M1467.1,544.7 L1481.1,543.0 L1496.0,548.2 L1484.8,549.7Z" fill="#0010ff" stroke="#0010ff" stroke-width="0.5"/><path d="M1481.1,543.0 L1496.5,541.8 L1508.4,547.1 L1496.0,548.2Z" fill="#0000a8" stroke="#0000a8" stroke-width="0.5"/><path d="M1496.5,541.8 L1513.2,541.2 L1522.0,546.5 L1508.4,547.1Z" fill="#0010ff" stroke="#0010ff" stroke-width="0.5"/><path d="M1513.2,541.2 L1530.7,541.1 L1536.5,546.4 L1522.0,546.5Z" fill="#0000a8" stroke="#0000a8" stroke-width="0.5"/><path d="M1530.7,541.1 L1548.8,541.6 L1551.5,546.7 L1536.5,546.4Z" fill="#0010ff" stroke="#0010ff" stroke-width="0.5"/><path d="M1548.8,541.6 L1567.2,542.6 L1566.8,547.6 L1551.5,546.7Z" fill="#0000a8" stroke="#0000a8" stroke-width="0.5"/><path d="M1567.2,542.6 L1585.5,544.1 L1582.1,548.9 L1566.8,547.6Z" fill="#0010ff" stroke="#0010ff" stroke-width="0.5"/><path d="M1585.5,544.1 L1603.5,546.2 L1597.0,550.6 L1582.1,548.9Z" fill="#0000a8" stroke="#0000a8" stroke-width="0.5"/><path d="M1603.5,546.2 L1620.8,548.7 L1611.3,552.8 L1597.0,550.6Z" fill="#0010ff" stroke="#0010ff" stroke-width="0.5"/><path d="M1620.8,548.7 L1637.2,551.6 L1624.6,555.3 L1611.3,552.8Z" fill="#0000a8" stroke="#0000a8" stroke-width="0.5"/><path d="M1637.2,551.6 L1652.3,555.0 L1636.8,558.1 L1624.6,555.3Z" fill="#0010ff" stroke="#0010ff" stroke-width="0.5"/><path d="M1652.3,555.0 L1666.0,558.6 L1647.6,561.1 L1636.8,558.1Z" fill="#0000a8" stroke="#0000a8" stroke-width="0.5"/><path d="M1666.0,558.6 L1677.9,562.5 L1656.9,564.3 L1647.6,561.1Z" fill="#0010ff" stroke="#0010ff" stroke-width="0.5"/><path d="M1677.9,562.5 L1687.9,566.6 L1664.5,567.7 L1656.9,564.3Z" fill="#0000a8" stroke="#0000a8" stroke-width="0.5"/><path d="M1687.9,566.6 L1695.8,570.8 L1670.3,571.1 L1664.5,567.7Z" fill="#0010ff" stroke="#0010ff" stroke-width="0.5"/><path d="M1695.8,570.8 L1701.4,575.0 L1674.3,574.5 L1670.3,571.1Z" fill="#0000a8" stroke="#0000a8" stroke-width="0.5"/><path d="M1701.4,575.0 L1704.7,579.2 L1676.4,577.9 L1674.3,574.5Z" fill="#0010ff" stroke="#0010ff" stroke-width="0.5"/><path d="M1704.7,579.2 L1705.7,583.3 L1676.6,581.1 L1676.4,577.9Z" fill="#0000a8" stroke="#0000a8" stroke-width="0.5"/></g></g><ellipse cx="1555" cy="543" rx="36" ry="24" transform="rotate(-12 1555 543)" fill="#86b07c" opacity="0.6"/><ellipse cx="1557" cy="567" rx="21" ry="28" transform="rotate(18 1557 567)" fill="#80b890" opacity="0.85"/><ellipse cx="1560" cy="567" rx="12" ry="17" transform="rotate(18 1557 567)" fill="none" stroke="#2a8a80" stroke-width="1.3" opacity="0.8"/><path d="M1511,575 Q1515,600 1545,617 Q1575,625 1600,605 L1560,600 Q1530,595 1520,575Z" fill="#0a3a3a" opacity="0.3"/><g clip-path="url(#cfr)"><g opacity="0.72" shape-rendering="geometricPrecision"><path d="M1705.7,583.3 L1704.2,587.3 L1675.0,584.2 L1676.6,581.1Z" fill="#0010ff" stroke="#0010ff" stroke-width="0.5"/><path d="M1704.2,587.3 L1700.3,591.0 L1671.6,587.1 L1675.0,584.2Z" fill="#0000a8" stroke="#0000a8" stroke-width="0.5"/><path d="M1700.3,591.0 L1694.1,594.4 L1666.5,589.7 L1671.6,587.1Z" fill="#0010ff" stroke="#0010ff" stroke-width="0.5"/><path d="M1694.1,594.4 L1685.7,597.5 L1659.7,592.1 L1666.5,589.7Z" fill="#0000a8" stroke="#0000a8" stroke-width="0.5"/><path d="M1685.7,597.5 L1675.3,600.1 L1651.4,594.1 L1659.7,592.1Z" fill="#0010ff" stroke="#0010ff" stroke-width="0.5"/><path d="M1675.3,600.1 L1662.9,602.3 L1641.6,595.8 L1651.4,594.1Z" fill="#0000a8" stroke="#0000a8" stroke-width="0.5"/><path d="M1662.9,602.3 L1648.9,604.0 L1630.6,597.1 L1641.6,595.8Z" fill="#0010ff" stroke="#0010ff" stroke-width="0.5"/><path d="M1648.9,604.0 L1633.5,605.2 L1618.5,598.1 L1630.6,597.1Z" fill="#0000a8" stroke="#0000a8" stroke-width="0.5"/><path d="M1633.5,605.2 L1616.8,605.8 L1605.5,598.5 L1618.5,598.1Z" fill="#0010ff" stroke="#0010ff" stroke-width="0.5"/><path d="M1616.8,605.8 L1599.3,605.9 L1591.8,598.6 L1605.5,598.5Z" fill="#0000a8" stroke="#0000a8" stroke-width="0.5"/><path d="M1599.3,605.9 L1581.2,605.4 L1577.7,598.2 L1591.8,598.6Z" fill="#0010ff" stroke="#0010ff" stroke-width="0.5"/><path d="M1581.2,605.4 L1562.8,604.4 L1563.3,597.4 L1577.7,598.2Z" fill="#0000a8" stroke="#0000a8" stroke-width="0.5"/><path d="M1562.8,604.4 L1544.5,602.9 L1549.0,596.2 L1563.3,597.4Z" fill="#0010ff" stroke="#0010ff" stroke-width="0.5"/><path d="M1544.5,602.9 L1526.5,600.8 L1534.9,594.6 L1549.0,596.2Z" fill="#0000a8" stroke="#0000a8" stroke-width="0.5"/><path d="M1526.5,600.8 L1509.2,598.3 L1521.4,592.7 L1534.9,594.6Z" fill="#0010ff" stroke="#0010ff" stroke-width="0.5"/><path d="M1509.2,598.3 L1492.8,595.4 L1508.6,590.4 L1521.4,592.7Z" fill="#0000a8" stroke="#0000a8" stroke-width="0.5"/><path d="M1492.8,595.4 L1477.7,592.0 L1496.7,587.8 L1508.6,590.4Z" fill="#0010ff" stroke="#0010ff" stroke-width="0.5"/><path d="M1477.7,592.0 L1464.0,588.4 L1485.9,585.0 L1496.7,587.8Z" fill="#0000a8" stroke="#0000a8" stroke-width="0.5"/><path d="M1464.0,588.4 L1452.1,584.5 L1476.5,581.9 L1485.9,585.0Z" fill="#0010ff" stroke="#0010ff" stroke-width="0.5"/><path d="M1452.1,584.5 L1442.1,580.4 L1468.5,578.7 L1476.5,581.9Z" fill="#0000a8" stroke="#0000a8" stroke-width="0.5"/><path d="M1442.1,580.4 L1434.2,576.2 L1462.1,575.4 L1468.5,578.7Z" fill="#0010ff" stroke="#0010ff" stroke-width="0.5"/><path d="M1434.2,576.2 L1428.6,572.0 L1457.4,572.1 L1462.1,575.4Z" fill="#0000a8" stroke="#0000a8" stroke-width="0.5"/><path d="M1428.6,572.0 L1425.3,567.8 L1454.4,568.8 L1457.4,572.1Z" fill="#0010ff" stroke="#0010ff" stroke-width="0.5"/><path d="M1425.3,567.8 L1424.3,563.7 L1453.3,565.5 L1454.4,568.8Z" fill="#0000a8" stroke="#0000a8" stroke-width="0.5"/><path d="M1424.3,563.7 L1425.8,559.7 L1454.0,562.3 L1453.3,565.5Z" fill="#0010ff" stroke="#0010ff" stroke-width="0.5"/><path d="M1425.8,559.7 L1429.7,556.0 L1456.5,559.3 L1454.0,562.3Z" fill="#0000a8" stroke="#0000a8" stroke-width="0.5"/><path d="M1429.7,556.0 L1435.9,552.6 L1461.0,556.4 L1456.5,559.3Z" fill="#0010ff" stroke="#0010ff" stroke-width="0.5"/><path d="M1435.9,552.6 L1444.3,549.5 L1467.2,553.9 L1461.0,556.4Z" fill="#0000a8" stroke="#0000a8" stroke-width="0.5"/><path d="M1444.3,549.5 L1454.7,546.9 L1475.2,551.6 L1467.2,553.9Z" fill="#0010ff" stroke="#0010ff" stroke-width="0.5"/><path d="M1454.7,546.9 L1467.1,544.7 L1484.8,549.7 L1475.2,551.6Z" fill="#0000a8" stroke="#0000a8" stroke-width="0.5"/><path d="M1467.1,544.7 L1481.1,543.0 L1496.0,548.2 L1484.8,549.7Z" fill="#0010ff" stroke="#0010ff" stroke-width="0.5"/><path d="M1481.1,543.0 L1496.5,541.8 L1508.4,547.1 L1496.0,548.2Z" fill="#0000a8" stroke="#0000a8" stroke-width="0.5"/><path d="M1496.5,541.8 L1513.2,541.2 L1522.0,546.5 L1508.4,547.1Z" fill="#0010ff" stroke="#0010ff" stroke-width="0.5"/><path d="M1513.2,541.2 L1530.7,541.1 L1536.5,546.4 L1522.0,546.5Z" fill="#0000a8" stroke="#0000a8" stroke-width="0.5"/><path d="M1530.7,541.1 L1548.8,541.6 L1551.5,546.7 L1536.5,546.4Z" fill="#0010ff" stroke="#0010ff" stroke-width="0.5"/><path d="M1548.8,541.6 L1567.2,542.6 L1566.8,547.6 L1551.5,546.7Z" fill="#0000a8" stroke="#0000a8" stroke-width="0.5"/><path d="M1567.2,542.6 L1585.5,544.1 L1582.1,548.9 L1566.8,547.6Z" fill="#0010ff" stroke="#0010ff" stroke-width="0.5"/><path d="M1585.5,544.1 L1603.5,546.2 L1597.0,550.6 L1582.1,548.9Z" fill="#0000a8" stroke="#0000a8" stroke-width="0.5"/><path d="M1603.5,546.2 L1620.8,548.7 L1611.3,552.8 L1597.0,550.6Z" fill="#0010ff" stroke="#0010ff" stroke-width="0.5"/><path d="M1620.8,548.7 L1637.2,551.6 L1624.6,555.3 L1611.3,552.8Z" fill="#0000a8" stroke="#0000a8" stroke-width="0.5"/><path d="M1637.2,551.6 L1652.3,555.0 L1636.8,558.1 L1624.6,555.3Z" fill="#0010ff" stroke="#0010ff" stroke-width="0.5"/><path d="M1652.3,555.0 L1666.0,558.6 L1647.6,561.1 L1636.8,558.1Z" fill="#0000a8" stroke="#0000a8" stroke-width="0.5"/><path d="M1666.0,558.6 L1677.9,562.5 L1656.9,564.3 L1647.6,561.1Z" fill="#0010ff" stroke="#0010ff" stroke-width="0.5"/><path d="M1677.9,562.5 L1687.9,566.6 L1664.5,567.7 L1656.9,564.3Z" fill="#0000a8" stroke="#0000a8" stroke-width="0.5"/><path d="M1687.9,566.6 L1695.8,570.8 L1670.3,571.1 L1664.5,567.7Z" fill="#0010ff" stroke="#0010ff" stroke-width="0.5"/><path d="M1695.8,570.8 L1701.4,575.0 L1674.3,574.5 L1670.3,571.1Z" fill="#0000a8" stroke="#0000a8" stroke-width="0.5"/><path d="M1701.4,575.0 L1704.7,579.2 L1676.4,577.9 L1674.3,574.5Z" fill="#0010ff" stroke="#0010ff" stroke-width="0.5"/><path d="M1704.7,579.2 L1705.7,583.3 L1676.6,581.1 L1676.4,577.9Z" fill="#0000a8" stroke="#0000a8" stroke-width="0.5"/></g></g><g opacity="0.52" shape-rendering="geometricPrecision"><path d="M1606.4,439.7 L1619.5,446.7 L1604.6,475.3 L1594.6,470.0Z" fill="#ff0000" stroke="#ff0000" stroke-width="0.5"/><path d="M1619.5,446.7 L1631.1,456.5 L1613.4,482.8 L1604.6,475.3Z" fill="#a80000" stroke="#a80000" stroke-width="0.5"/><path d="M1631.1,456.5 L1640.9,469.0 L1620.8,492.3 L1613.4,482.8Z" fill="#ff0000" stroke="#ff0000" stroke-width="0.5"/><path d="M1640.9,469.0 L1648.6,484.0 L1626.6,503.6 L1620.8,492.3Z" fill="#a80000" stroke="#a80000" stroke-width="0.5"/><path d="M1648.6,484.0 L1654.0,500.9 L1630.8,516.5 L1626.6,503.6Z" fill="#ff0000" stroke="#ff0000" stroke-width="0.5"/><path d="M1654.0,500.9 L1657.1,519.4 L1633.1,530.6 L1630.8,516.5Z" fill="#a80000" stroke="#a80000" stroke-width="0.5"/><path d="M1657.1,519.4 L1657.7,539.1 L1633.6,545.5 L1633.1,530.6Z" fill="#ff0000" stroke="#ff0000" stroke-width="0.5"/><path d="M1657.7,539.1 L1655.9,559.5 L1632.2,561.0 L1633.6,545.5Z" fill="#a80000" stroke="#a80000" stroke-width="0.5"/><path d="M1655.9,559.5 L1651.6,580.0 L1628.9,576.6 L1632.2,561.0Z" fill="#ff0000" stroke="#ff0000" stroke-width="0.5"/><path d="M1651.6,580.0 L1645.0,600.1 L1623.9,591.9 L1628.9,576.6Z" fill="#a80000" stroke="#a80000" stroke-width="0.5"/><path d="M1645.0,600.1 L1636.2,619.4 L1617.2,606.6 L1623.9,591.9Z" fill="#ff0000" stroke="#ff0000" stroke-width="0.5"/><path d="M1636.2,619.4 L1625.5,637.4 L1609.1,620.3 L1617.2,606.6Z" fill="#a80000" stroke="#a80000" stroke-width="0.5"/><path d="M1625.5,637.4 L1613.1,653.7 L1599.7,632.6 L1609.1,620.3Z" fill="#ff0000" stroke="#ff0000" stroke-width="0.5"/><path d="M1613.1,653.7 L1599.3,667.7 L1589.2,643.3 L1599.7,632.6Z" fill="#a80000" stroke="#a80000" stroke-width="0.5"/><path d="M1599.3,667.7 L1584.5,679.3 L1577.9,652.1 L1589.2,643.3Z" fill="#ff0000" stroke="#ff0000" stroke-width="0.5"/><path d="M1584.5,679.3 L1569.0,688.1 L1566.2,658.8 L1577.9,652.1Z" fill="#a80000" stroke="#a80000" stroke-width="0.5"/><path d="M1569.0,688.1 L1553.2,693.8 L1554.2,663.1 L1566.2,658.8Z" fill="#ff0000" stroke="#ff0000" stroke-width="0.5"/><path d="M1553.2,693.8 L1537.5,696.5 L1542.3,665.1 L1554.2,663.1Z" fill="#a80000" stroke="#a80000" stroke-width="0.5"/><path d="M1537.5,696.5 L1522.4,695.9 L1530.7,664.7 L1542.3,665.1Z" fill="#ff0000" stroke="#ff0000" stroke-width="0.5"/><path d="M1522.4,695.9 L1508.0,692.1 L1519.8,661.8 L1530.7,664.7Z" fill="#a80000" stroke="#a80000" stroke-width="0.5"/><path d="M1508.0,692.1 L1494.9,685.1 L1509.8,656.5 L1519.8,661.8Z" fill="#ff0000" stroke="#ff0000" stroke-width="0.5"/><path d="M1494.9,685.1 L1483.3,675.3 L1501.0,649.0 L1509.8,656.5Z" fill="#a80000" stroke="#a80000" stroke-width="0.5"/><path d="M1483.3,675.3 L1473.5,662.8 L1493.6,639.5 L1501.0,649.0Z" fill="#ff0000" stroke="#ff0000" stroke-width="0.5"/><path d="M1473.5,662.8 L1465.8,647.8 L1487.8,628.2 L1493.6,639.5Z" fill="#a80000" stroke="#a80000" stroke-width="0.5"/><path d="M1465.8,647.8 L1460.4,630.9 L1483.6,615.3 L1487.8,628.2Z" fill="#ff0000" stroke="#ff0000" stroke-width="0.5"/><path d="M1460.4,630.9 L1457.3,612.4 L1481.3,601.2 L1483.6,615.3Z" fill="#a80000" stroke="#a80000" stroke-width="0.5"/><path d="M1457.3,612.4 L1456.7,592.7 L1480.8,586.3 L1481.3,601.2Z" fill="#ff0000" stroke="#ff0000" stroke-width="0.5"/><path d="M1456.7,592.7 L1458.5,572.3 L1482.2,570.8 L1480.8,586.3Z" fill="#a80000" stroke="#a80000" stroke-width="0.5"/><path d="M1458.5,572.3 L1462.8,551.8 L1485.5,555.2 L1482.2,570.8Z" fill="#ff0000" stroke="#ff0000" stroke-width="0.5"/><path d="M1462.8,551.8 L1469.4,531.7 L1490.5,539.9 L1485.5,555.2Z" fill="#a80000" stroke="#a80000" stroke-width="0.5"/><path d="M1469.4,531.7 L1478.2,512.4 L1497.2,525.2 L1490.5,539.9Z" fill="#ff0000" stroke="#ff0000" stroke-width="0.5"/><path d="M1478.2,512.4 L1488.9,494.4 L1505.3,511.5 L1497.2,525.2Z" fill="#a80000" stroke="#a80000" stroke-width="0.5"/><path d="M1488.9,494.4 L1501.3,478.1 L1514.7,499.2 L1505.3,511.5Z" fill="#ff0000" stroke="#ff0000" stroke-width="0.5"/><path d="M1501.3,478.1 L1515.1,464.1 L1525.2,488.5 L1514.7,499.2Z" fill="#a80000" stroke="#a80000" stroke-width="0.5"/><path d="M1515.1,464.1 L1529.9,452.5 L1536.5,479.7 L1525.2,488.5Z" fill="#ff0000" stroke="#ff0000" stroke-width="0.5"/><path d="M1529.9,452.5 L1545.4,443.7 L1548.2,473.0 L1536.5,479.7Z" fill="#a80000" stroke="#a80000" stroke-width="0.5"/><path d="M1545.4,443.7 L1561.2,438.0 L1560.2,468.7 L1548.2,473.0Z" fill="#ff0000" stroke="#ff0000" stroke-width="0.5"/><path d="M1561.2,438.0 L1576.9,435.3 L1572.1,466.7 L1560.2,468.7Z" fill="#a80000" stroke="#a80000" stroke-width="0.5"/><path d="M1576.9,435.3 L1592.0,435.9 L1583.7,467.1 L1572.1,466.7Z" fill="#ff0000" stroke="#ff0000" stroke-width="0.5"/><path d="M1592.0,435.9 L1606.4,439.7 L1594.6,470.0 L1583.7,467.1Z" fill="#a80000" stroke="#a80000" stroke-width="0.5"/></g><clipPath id="cgr" clip-rule="evenodd"><path clip-rule="evenodd" d="M1300,300 H1800 V850 H1300Z M1456,516 L1478,508 L1530,500 L1536,586 L1492,588 L1456,586Z"/></clipPath><g clip-path="url(#cgr)"><g opacity="0.5" shape-rendering="geometricPrecision"><path d="M1541.3,436.2 L1556.2,434.5 L1559.8,466.4 L1548.4,467.7Z" fill="#00ff00" stroke="#00ff00" stroke-width="0.5"/><path d="M1556.2,434.5 L1571.5,436.1 L1571.4,467.7 L1559.8,466.4Z" fill="#009a00" stroke="#009a00" stroke-width="0.5"/><path d="M1571.5,436.1 L1586.8,441.0 L1583.0,471.3 L1571.4,467.7Z" fill="#00ff00" stroke="#00ff00" stroke-width="0.5"/><path d="M1586.8,441.0 L1601.7,448.9 L1594.3,477.4 L1583.0,471.3Z" fill="#009a00" stroke="#009a00" stroke-width="0.5"/><path d="M1601.7,448.9 L1615.8,459.8 L1605.0,485.7 L1594.3,477.4Z" fill="#00ff00" stroke="#00ff00" stroke-width="0.5"/><path d="M1615.8,459.8 L1628.8,473.4 L1614.9,495.9 L1605.0,485.7Z" fill="#009a00" stroke="#009a00" stroke-width="0.5"/><path d="M1628.8,473.4 L1640.4,489.2 L1623.7,508.0 L1614.9,495.9Z" fill="#00ff00" stroke="#00ff00" stroke-width="0.5"/><path d="M1640.4,489.2 L1650.3,507.0 L1631.2,521.5 L1623.7,508.0Z" fill="#009a00" stroke="#009a00" stroke-width="0.5"/><path d="M1650.3,507.0 L1658.2,526.2 L1637.2,536.1 L1631.2,521.5Z" fill="#00ff00" stroke="#00ff00" stroke-width="0.5"/><path d="M1658.2,526.2 L1664.0,546.5 L1641.6,551.6 L1637.2,536.1Z" fill="#009a00" stroke="#009a00" stroke-width="0.5"/><path d="M1664.0,546.5 L1667.4,567.3 L1644.3,567.4 L1641.6,551.6Z" fill="#00ff00" stroke="#00ff00" stroke-width="0.5"/><path d="M1667.4,567.3 L1668.6,588.1 L1645.1,583.2 L1644.3,567.4Z" fill="#009a00" stroke="#009a00" stroke-width="0.5"/><path d="M1668.6,588.1 L1667.3,608.4 L1644.1,598.6 L1645.1,583.2Z" fill="#00ff00" stroke="#00ff00" stroke-width="0.5"/><path d="M1667.3,608.4 L1663.6,627.7 L1641.3,613.3 L1644.1,598.6Z" fill="#009a00" stroke="#009a00" stroke-width="0.5"/><path d="M1663.6,627.7 L1657.6,645.5 L1636.8,626.8 L1641.3,613.3Z" fill="#00ff00" stroke="#00ff00" stroke-width="0.5"/><path d="M1657.6,645.5 L1649.5,661.4 L1630.7,638.9 L1636.8,626.8Z" fill="#009a00" stroke="#009a00" stroke-width="0.5"/><path d="M1649.5,661.4 L1639.5,675.0 L1623.0,649.2 L1630.7,638.9Z" fill="#00ff00" stroke="#00ff00" stroke-width="0.5"/><path d="M1639.5,675.0 L1627.8,685.9 L1614.1,657.5 L1623.0,649.2Z" fill="#009a00" stroke="#009a00" stroke-width="0.5"/><path d="M1627.8,685.9 L1614.7,693.9 L1604.2,663.6 L1614.1,657.5Z" fill="#00ff00" stroke="#00ff00" stroke-width="0.5"/><path d="M1614.7,693.9 L1600.5,698.8 L1593.4,667.3 L1604.2,663.6Z" fill="#009a00" stroke="#009a00" stroke-width="0.5"/><path d="M1600.5,698.8 L1585.6,700.5 L1582.0,668.6 L1593.4,667.3Z" fill="#00ff00" stroke="#00ff00" stroke-width="0.5"/><path d="M1585.6,700.5 L1570.3,698.9 L1570.4,667.3 L1582.0,668.6Z" fill="#009a00" stroke="#009a00" stroke-width="0.5"/><path d="M1570.3,698.9 L1555.0,694.0 L1558.8,663.7 L1570.4,667.3Z" fill="#00ff00" stroke="#00ff00" stroke-width="0.5"/><path d="M1555.0,694.0 L1540.1,686.1 L1547.5,657.6 L1558.8,663.7Z" fill="#009a00" stroke="#009a00" stroke-width="0.5"/><path d="M1540.1,686.1 L1526.0,675.2 L1536.8,649.3 L1547.5,657.6Z" fill="#00ff00" stroke="#00ff00" stroke-width="0.5"/><path d="M1526.0,675.2 L1513.0,661.6 L1526.9,639.1 L1536.8,649.3Z" fill="#009a00" stroke="#009a00" stroke-width="0.5"/><path d="M1513.0,661.6 L1501.4,645.8 L1518.1,627.0 L1526.9,639.1Z" fill="#00ff00" stroke="#00ff00" stroke-width="0.5"/><path d="M1501.4,645.8 L1491.5,628.0 L1510.6,613.5 L1518.1,627.0Z" fill="#009a00" stroke="#009a00" stroke-width="0.5"/><path d="M1491.5,628.0 L1483.6,608.8 L1504.6,598.9 L1510.6,613.5Z" fill="#00ff00" stroke="#00ff00" stroke-width="0.5"/><path d="M1483.6,608.8 L1477.8,588.5 L1500.2,583.4 L1504.6,598.9Z" fill="#009a00" stroke="#009a00" stroke-width="0.5"/><path d="M1477.8,588.5 L1474.4,567.7 L1497.5,567.6 L1500.2,583.4Z" fill="#00ff00" stroke="#00ff00" stroke-width="0.5"/><path d="M1474.4,567.7 L1473.2,546.9 L1496.7,551.8 L1497.5,567.6Z" fill="#009a00" stroke="#009a00" stroke-width="0.5"/><path d="M1473.2,546.9 L1474.5,526.6 L1497.7,536.4 L1496.7,551.8Z" fill="#00ff00" stroke="#00ff00" stroke-width="0.5"/><path d="M1474.5,526.6 L1478.2,507.3 L1500.5,521.7 L1497.7,536.4Z" fill="#009a00" stroke="#009a00" stroke-width="0.5"/><path d="M1478.2,507.3 L1484.2,489.5 L1505.0,508.2 L1500.5,521.7Z" fill="#00ff00" stroke="#00ff00" stroke-width="0.5"/><path d="M1484.2,489.5 L1492.3,473.6 L1511.1,496.1 L1505.0,508.2Z" fill="#009a00" stroke="#009a00" stroke-width="0.5"/><path d="M1492.3,473.6 L1502.3,460.0 L1518.8,485.8 L1511.1,496.1Z" fill="#00ff00" stroke="#00ff00" stroke-width="0.5"/><path d="M1502.3,460.0 L1514.0,449.1 L1527.7,477.5 L1518.8,485.8Z" fill="#009a00" stroke="#009a00" stroke-width="0.5"/><path d="M1514.0,449.1 L1527.1,441.1 L1537.6,471.4 L1527.7,477.5Z" fill="#00ff00" stroke="#00ff00" stroke-width="0.5"/><path d="M1527.1,441.1 L1541.3,436.2 L1548.4,467.7 L1537.6,471.4Z" fill="#009a00" stroke="#009a00" stroke-width="0.5"/></g></g><line x1="1574.0" y1="467.0" x2="1574.0" y2="426.0" stroke="#2424b0" stroke-width="36" opacity="0.7"/><g opacity="0.8"><path d="M1577.2,379.8 L1601.9,426.0 L1546.1,422.0Z" fill="#2030c8"/><ellipse cx="1574.0" cy="424.0" rx="28" ry="5" transform="rotate(4.1 1574.0 424.0)" fill="#2030c8"/></g><line x1="1549.0" y1="690.0" x2="1549.0" y2="706.0" stroke="#2424b0" stroke-width="33" opacity="0.7"/><g opacity="0.8"><path d="M1546.3,740.7 L1523.7,704.0 L1575.5,709.0Z" fill="#2030b8"/><ellipse cx="1549.6" cy="706.5" rx="26" ry="5" transform="rotate(-174.5 1549.6 706.5)" fill="#2030b8"/></g><line x1="1488.0" y1="590.0" x2="1459.0" y2="588.0" stroke="#20a020" stroke-width="34" opacity="0.65"/><g opacity="0.8"><path d="M1413.0,594.4 L1454.9,562.3 L1462.1,613.7Z" fill="#22b422"/><ellipse cx="1458.5" cy="588.0" rx="26" ry="8" transform="rotate(-98.0 1458.5 588.0)" fill="#22b422"/></g><g opacity="0.45"><path d="M1689.4,547.2 L1652.7,573.8 L1647.3,530.2Z" fill="#20a020"/><ellipse cx="1650.0" cy="552.0" rx="22" ry="7" transform="rotate(83.1 1650.0 552.0)" fill="#20a020"/></g><line x1="1640.0" y1="597.0" x2="1675.0" y2="604.0" stroke="#b01818" stroke-width="34" opacity="0.65"/><g opacity="0.8"><path d="M1715.4,617.2 L1666.9,628.7 L1683.1,579.3Z" fill="#c81a1a"/><ellipse cx="1675.0" cy="604.0" rx="26" ry="9" transform="rotate(108.1 1675.0 604.0)" fill="#c81a1a"/></g></g></svg>
<div class="abs" style="left:544px;top:123px;width:200px;height:97px;box-shadow:0 2px 12px 3px rgba(0,0,0,0.35);border-radius:6px 6px 0 0"></div>
<div class="abs" style="left:544px;top:123px;width:200px;height:37px;background:#353535;border-radius:6px 6px 0 0;border-top:1px solid #4a4a4a;border-bottom:1px solid #1e1e1e"></div>
<div class="abs" style="left:544px;top:160px;width:200px;height:60px;background:#efefef"></div>
<div class="t" style="left:581px;top:133px;font-weight:bold;font-size:12.8px;letter-spacing:0;color:#fff">Slider Publisher</div>
<div class="abs" style="left:688px;top:143px;width:8px;height:2px;background:#fff"></div>
<svg class="abs" style="left:721px;top:136px" width="10" height="10"><path d="M1 1L9 9M9 1L1 9" stroke="#fff" stroke-width="1.8"/></svg>
<div class="t" style="left:555px;top:171px">Value: 100</div>
<div class="abs" style="left:556px;top:199px;width:168px;height:6px;background:#3d9ee6;border:1px solid #2d7ab8;border-radius:3px"></div>
<div class="abs" style="left:719px;top:195px;width:13px;height:13px;background:linear-gradient(#fff,#ececec);border:1px solid #9a9a9a;border-radius:3px"></div>
</body></html>
